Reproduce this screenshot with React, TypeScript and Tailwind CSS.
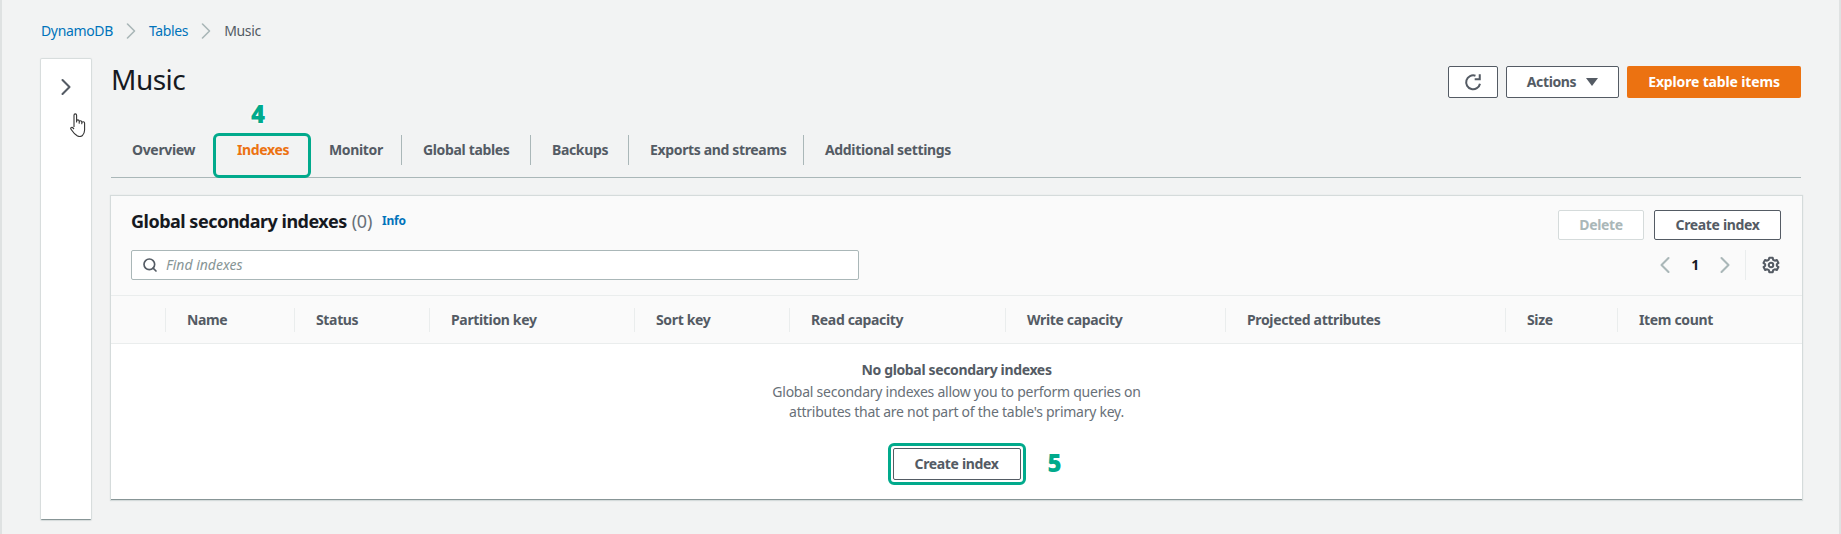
import { ChevronLeft, ChevronRight, Search } from "lucide-react";

const columns = [
  { label: "Name" },
  { label: "Status" },
  { label: "Partition key" },
  { label: "Sort key" },
  { label: "Read capacity" },
  { label: "Write capacity" },
  { label: "Projected attributes" },
  { label: "Size" },
  { label: "Item count" },
];

const tabs = [
  { label: "Monitor", className: "flex h-[30px] w-[72px] items-center" },
  { label: "Global tables", className: "flex h-[30px] w-[129px] items-center border-l border-[#aab7b8] pl-[21px]" },
  { label: "Backups", className: "flex h-[30px] w-[98px] items-center border-l border-[#aab7b8] pl-[21px]" },
  { label: "Exports and streams", className: "flex h-[30px] w-[175px] items-center border-l border-[#aab7b8] pl-[21px]" },
  { label: "Additional settings", className: "flex h-[30px] items-center border-l border-[#aab7b8] pl-[21px]" },
];

function Refresh() {
  return (
    <svg viewBox="0 0 16 16" className="h-[18px] w-[18px]" fill="none" stroke="#545b64" strokeWidth="1.8">
      <path d="M14.2 9.5A6.2 6.2 0 1 1 10.2 2.4" />
      <path d="M14 1v4.6H9.5" strokeLinejoin="miter" />
    </svg>
  );
}

function Gear() {
  return (
    <svg viewBox="0 0 16 16" className="h-[18px] w-[18px]" fill="none" stroke="#545b64" strokeWidth="1.8">
      <circle cx="8" cy="8" r="2" />
      <path d="M6.5 1.5h3l.4 1.9 1.5.8 1.8-.7 1.4 2.6-1.4 1.2v1.4l1.4 1.2-1.4 2.6-1.8-.7-1.5.8-.4 1.9h-3l-.4-1.9-1.5-.8-1.8.7-1.4-2.6 1.4-1.2V7.3L1.3 6.1l1.4-2.6 1.8.7 1.5-.8z" strokeLinejoin="round" />
    </svg>
  );
}

function HandCursor() {
  return (
    <svg viewBox="0 0 18 24" className="h-6 w-[18px]" fill="#fff" stroke="#333" strokeWidth="1.1" strokeLinejoin="round">
      <path d="M5 14V2.2a1.3 1.3 0 0 1 2.6 0V9V8.2a1.3 1.3 0 0 1 2.6 0v2V9a1.3 1.3 0 0 1 2.6 0v1.7-.6a1.4 1.4 0 0 1 2.8 0V17c0 2.6-.8 4.2-2.4 5.8-1.4.8-3.6.8-5 0-2.5-1.6-4.2-3.6-6.2-6.6-.7-1 .4-2.4 1.6-1.7L5 16" />
    </svg>
  );
}

export default function App() {
  return (
    <div className="h-[534px] w-[1841px] overflow-hidden border-x-2 border-[#dfe2e2] bg-[#f2f3f3] font-['Noto_Sans',sans-serif] text-sm tracking-[-0.25px] text-[#16191f]">
      <nav className="flex h-[59px] items-center gap-[4px] pt-[3px] pl-[39px] tracking-[-0.35px]">
        <span className="text-[#0073bb]">DynamoDB</span>
        <ChevronRight className="h-7 w-7 text-[#aab7b8]" strokeWidth={1.4} />
        <span className="text-[#0073bb]">Tables</span>
        <ChevronRight className="h-7 w-7 text-[#aab7b8]" strokeWidth={1.4} />
        <span className="text-[#545b64]">Music</span>
      </nav>

      <div className="flex items-start gap-5 pl-[39px]">
        <aside className="relative flex h-[461px] w-[50px] justify-center rounded-[1px] border-b border-[#879596] bg-white pt-[14px] shadow-[0_0_1px_1px_#d5dbdb]">
          <ChevronRight className="h-7 w-7 text-[#545b64]" strokeWidth={1.8} />
          <div className="absolute left-[28px] top-[54px]">
            <HandCursor />
          </div>
        </aside>

        <main className="w-[1691px]">
          <div className="flex h-[64px] items-start justify-between pt-[2px]">
            <h1 className="text-[28px] leading-[36px] tracking-[-0.5px]">Music</h1>
            <div className="mr-[1px] mt-[5px] flex gap-2 font-bold tracking-[-0.35px]">
              <button className="flex h-8 w-[50px] items-center justify-center rounded-[2px] border border-[#545b64] bg-white">
                <Refresh />
              </button>
              <button className="flex h-8 w-[113px] items-center justify-center gap-[10px] rounded-[2px] border border-[#545b64] bg-white text-[#545b64]">
                Actions
                <span className="h-0 w-0 border-x-[6px] border-t-[8px] border-x-transparent border-t-[#545b64]" />
              </button>
              <button className="h-8 w-[174px] rounded-[2px] bg-[#ec7211] tracking-[-0.15px] text-white">Explore table items</button>
            </div>
          </div>

          <div className="relative mr-[1px] flex h-[55px] items-center border-b border-[#aab7b8] font-bold tracking-[-0.35px] text-[#545b64]">
            <span className="ml-[21px] w-[84px]">Overview</span>
            <span className="ml-[21px] w-[92px] text-[#ec7211]">Indexes</span>
            {tabs.map((t) => (
              <span key={t.label} className={t.className}>
                {t.label}
              </span>
            ))}
            <div className="absolute left-[102px] top-[10px] h-[45px] w-[98px] rounded-[6px] border-[3px] border-[#01aa8c]" />
            <span className="absolute left-[140px] top-[-26px] text-[24px] font-black text-[#01aa8c] [text-shadow:0_0_3px_#fff,0_0_3px_#fff]">4</span>
          </div>

          <section className="mt-[18px] w-[1691px] border-b border-[#879596] bg-white shadow-[0_0_1px_1px_#d5dbdb]">
            <header className="bg-[#fafafa]">
              <div className="flex h-[100px] justify-between border-b border-[#eaeded] pl-5 pr-[21px] pt-[14px]">
                <div>
                  <div className="flex h-[30px] items-center pb-2">
                    <h2 className="text-lg font-bold tracking-[-0.5px]">Global secondary indexes</h2>
                    <span className="ml-[5px] text-lg text-[#687078]">(0)</span>
                    <span className="ml-[10px] text-xs font-bold text-[#0073bb]">Info</span>
                  </div>
                  <div className="mt-[10px] flex h-[30px] w-[728px] items-center gap-2 rounded-[2px] border border-[#aab7b8] bg-white pl-[10px]">
                    <Search className="h-4 w-4 text-[#545b64]" strokeWidth={2.5} />
                    <span className="italic tracking-normal text-[#879596]">Find indexes</span>
                  </div>
                </div>
                <div className="flex flex-col items-end font-bold tracking-[-0.35px]">
                  <div className="flex gap-[10px]">
                    <button className="h-[30px] w-[86px] rounded-[2px] border border-[#d5dbdb] bg-white text-[#aab7b8]">Delete</button>
                    <button className="h-[30px] w-[127px] rounded-[2px] border border-[#545b64] bg-white text-[#545b64]">Create index</button>
                  </div>
                  <div className="mt-[10px] flex h-[30px] items-center">
                    <ChevronLeft className="-mx-[2px] h-7 w-7 text-[#aab7b8]" strokeWidth={1.8} />
                    <span className="w-[36px] text-center">1</span>
                    <ChevronRight className="-mx-[2px] h-7 w-7 text-[#aab7b8]" strokeWidth={1.8} />
                    <div className="ml-[8px] flex h-[30px] w-[36px] items-center border-l border-[#eaeded] pl-[16px]">
                      <Gear />
                    </div>
                  </div>
                </div>
              </div>
              <div className="grid h-[48px] grid-cols-[54px_129px_135px_205px_155px_216px_220px_280px_112px_185px] items-center border-b border-[#eaeded] font-bold tracking-[-0.35px] text-[#545b64]">
                <div />
                {columns.map((c) => (
                  <div key={c.label} className="flex h-6 items-center border-l border-[#eaeded] pl-[21px]">
                    {c.label}
                  </div>
                ))}
              </div>
            </header>
            <div className="relative flex h-[155px] flex-col items-center pt-4 text-center text-[#545b64]">
              <p className="font-bold leading-5 tracking-[-0.35px]">No global secondary indexes</p>
              <p className="mt-[2px] leading-5 text-[#687078]">
                Global secondary indexes allow you to perform queries on
                <br />
                attributes that are not part of the table's primary key.
              </p>
              <div className="relative mt-[26px]">
                <button className="h-8 w-[128px] rounded-[2px] border border-[#545b64] bg-white font-bold tracking-[-0.35px] text-[#545b64]">Create index</button>
                <div className="absolute -inset-[5px] rounded-[6px] border-[3px] border-[#01aa8c]" />
                <span className="absolute left-[155px] top-[-2px] text-[24px] font-black text-[#01aa8c]">5</span>
              </div>
            </div>
          </section>
        </main>
      </div>
    </div>
  );
}
